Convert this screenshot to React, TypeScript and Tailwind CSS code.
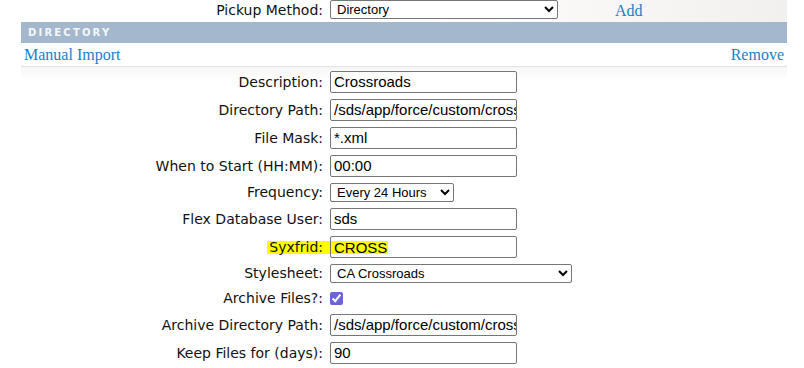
import React from "react"

const labelFont = { fontFamily: '"DejaVu Sans", Verdana, sans-serif' }
const fieldFont = { fontFamily: '"Liberation Sans", Arial, sans-serif' }
const linkFont = { fontFamily: '"Liberation Serif", "Times New Roman", serif' }

function Label({ children }: { children: React.ReactNode }) {
  return (
    <div className="flex justify-end pr-[7px] text-[14px] text-[#111]" style={labelFont}>
      <span>{children}</span>
    </div>
  )
}

function TextInput({ value }: { value: string }) {
  return (
    <input
      readOnly
      value={value}
      className="h-[22px] w-[187px] rounded-[2px] border border-[#767676] bg-white pl-[3px] text-[15px] text-black outline-none"
      style={fieldFont}
    />
  )
}

function Select({ value, options, width }: { value: string; options: string[]; width: string }) {
  return (
    <select
      defaultValue={value}
      className={`h-[19px] ${width} rounded-[2px] border border-[#767676] bg-white pl-[2px] text-[13px] text-black`}
      style={fieldFont}
    >
      {options.map((o) => (
        <option key={o}>{o}</option>
      ))}
    </select>
  )
}

type Row = { label: string; kind: "text" | "select" | "check" | "mark"; value?: string; options?: string[]; width?: string }

const rows: Row[] = [
  { label: "Description:", kind: "text", value: "Crossroads" },
  { label: "Directory Path:", kind: "text", value: "/sds/app/force/custom/crossroads" },
  { label: "File Mask:", kind: "text", value: "*.xml" },
  { label: "When to Start (HH:MM):", kind: "text", value: "00:00" },
  { label: "Frequency:", kind: "select", value: "Every 24 Hours", options: ["Every Hour", "Every 12 Hours", "Every 24 Hours"], width: "w-[124px]" },
  { label: "Flex Database User:", kind: "text", value: "sds" },
  { label: "Syxfrid:", kind: "mark", value: "CROSS" },
  { label: "Stylesheet:", kind: "select", value: "CA Crossroads", options: ["CA Crossroads", "Default"], width: "w-[242px]" },
  { label: "Archive Files?:", kind: "check" },
  { label: "Archive Directory Path:", kind: "text", value: "/sds/app/force/custom/crossroads/archive" },
  { label: "Keep Files for (days):", kind: "text", value: "90" },
]

export default function App() {
  return (
    <div className="min-h-screen bg-white pl-[21px] pr-[17px]">
      {/* pickup method */}
      <div className="grid h-[22px] grid-cols-[309px_1fr] items-start bg-linear-to-r from-white via-white to-[#f2f0ee]">
        <Label>Pickup Method:</Label>
        <div className="flex items-start">
          <Select value="Directory" options={["Directory", "FTP", "Email"]} width="w-[228px]" />
          <a className="ml-[57px] mt-px text-[16px] leading-[19px] text-[#1a7fc6]" style={linkFont}>
            Add
          </a>
        </div>
      </div>

      {/* section header */}
      <div className="flex h-[21px] items-center bg-[#a3b8cd] pl-[7px]">
        <span className="text-[10px] font-bold tracking-[0.22em] text-[#f4f6f8]" style={labelFont}>
          DIRECTORY
        </span>
      </div>

      <div className="flex h-[24px] items-center justify-between border-b border-[#e4e4e4] px-[3px] pt-px text-[16px] text-[#1a7fc6]" style={linkFont}>
        <a>Manual Import</a>
        <a>Remove</a>
      </div>

      {/* form */}
      <div className="grid grid-cols-[309px_1fr] border-b border-[#a7b9cb] bg-linear-to-b from-[#f6f6f6] to-white bg-[length:100%_14px] bg-no-repeat pt-px pb-px">
        {rows.map((r) => (
          <React.Fragment key={r.label}>
            {r.kind === "mark" ? (
              <div className="flex h-[28px] items-center justify-end text-[14px] text-[#111]" style={labelFont}>
                <span className="bg-[#ffff00] pl-[2px] pr-[7px] leading-[13px]">{r.label}</span>
              </div>
            ) : (
              <div className={`flex items-center justify-end ${r.kind === "text" ? "h-[28px]" : "h-[25px]"}`}>
                <Label>{r.label}</Label>
              </div>
            )}
            <div className={`flex items-center ${r.kind === "text" || r.kind === "mark" ? "h-[28px]" : "h-[25px]"}`}>
              {r.kind === "text" && <TextInput value={r.value!} />}
              {r.kind === "select" && <Select value={r.value!} options={r.options!} width={r.width!} />}
              {r.kind === "check" && (
                <input type="checkbox" readOnly checked className="h-[13px] w-[13px] accent-[#6c63d7]" />
              )}
              {r.kind === "mark" && (
                <div className="flex h-[22px] w-[187px] items-center rounded-[2px] border border-[#767676] bg-white text-[15px] text-black" style={fieldFont}>
                  <span className="bg-[#ffff00] pl-[3px] pr-px leading-[13px]">{r.value}</span>
                </div>
              )}
            </div>
          </React.Fragment>
        ))}
      </div>
    </div>
  )
}
